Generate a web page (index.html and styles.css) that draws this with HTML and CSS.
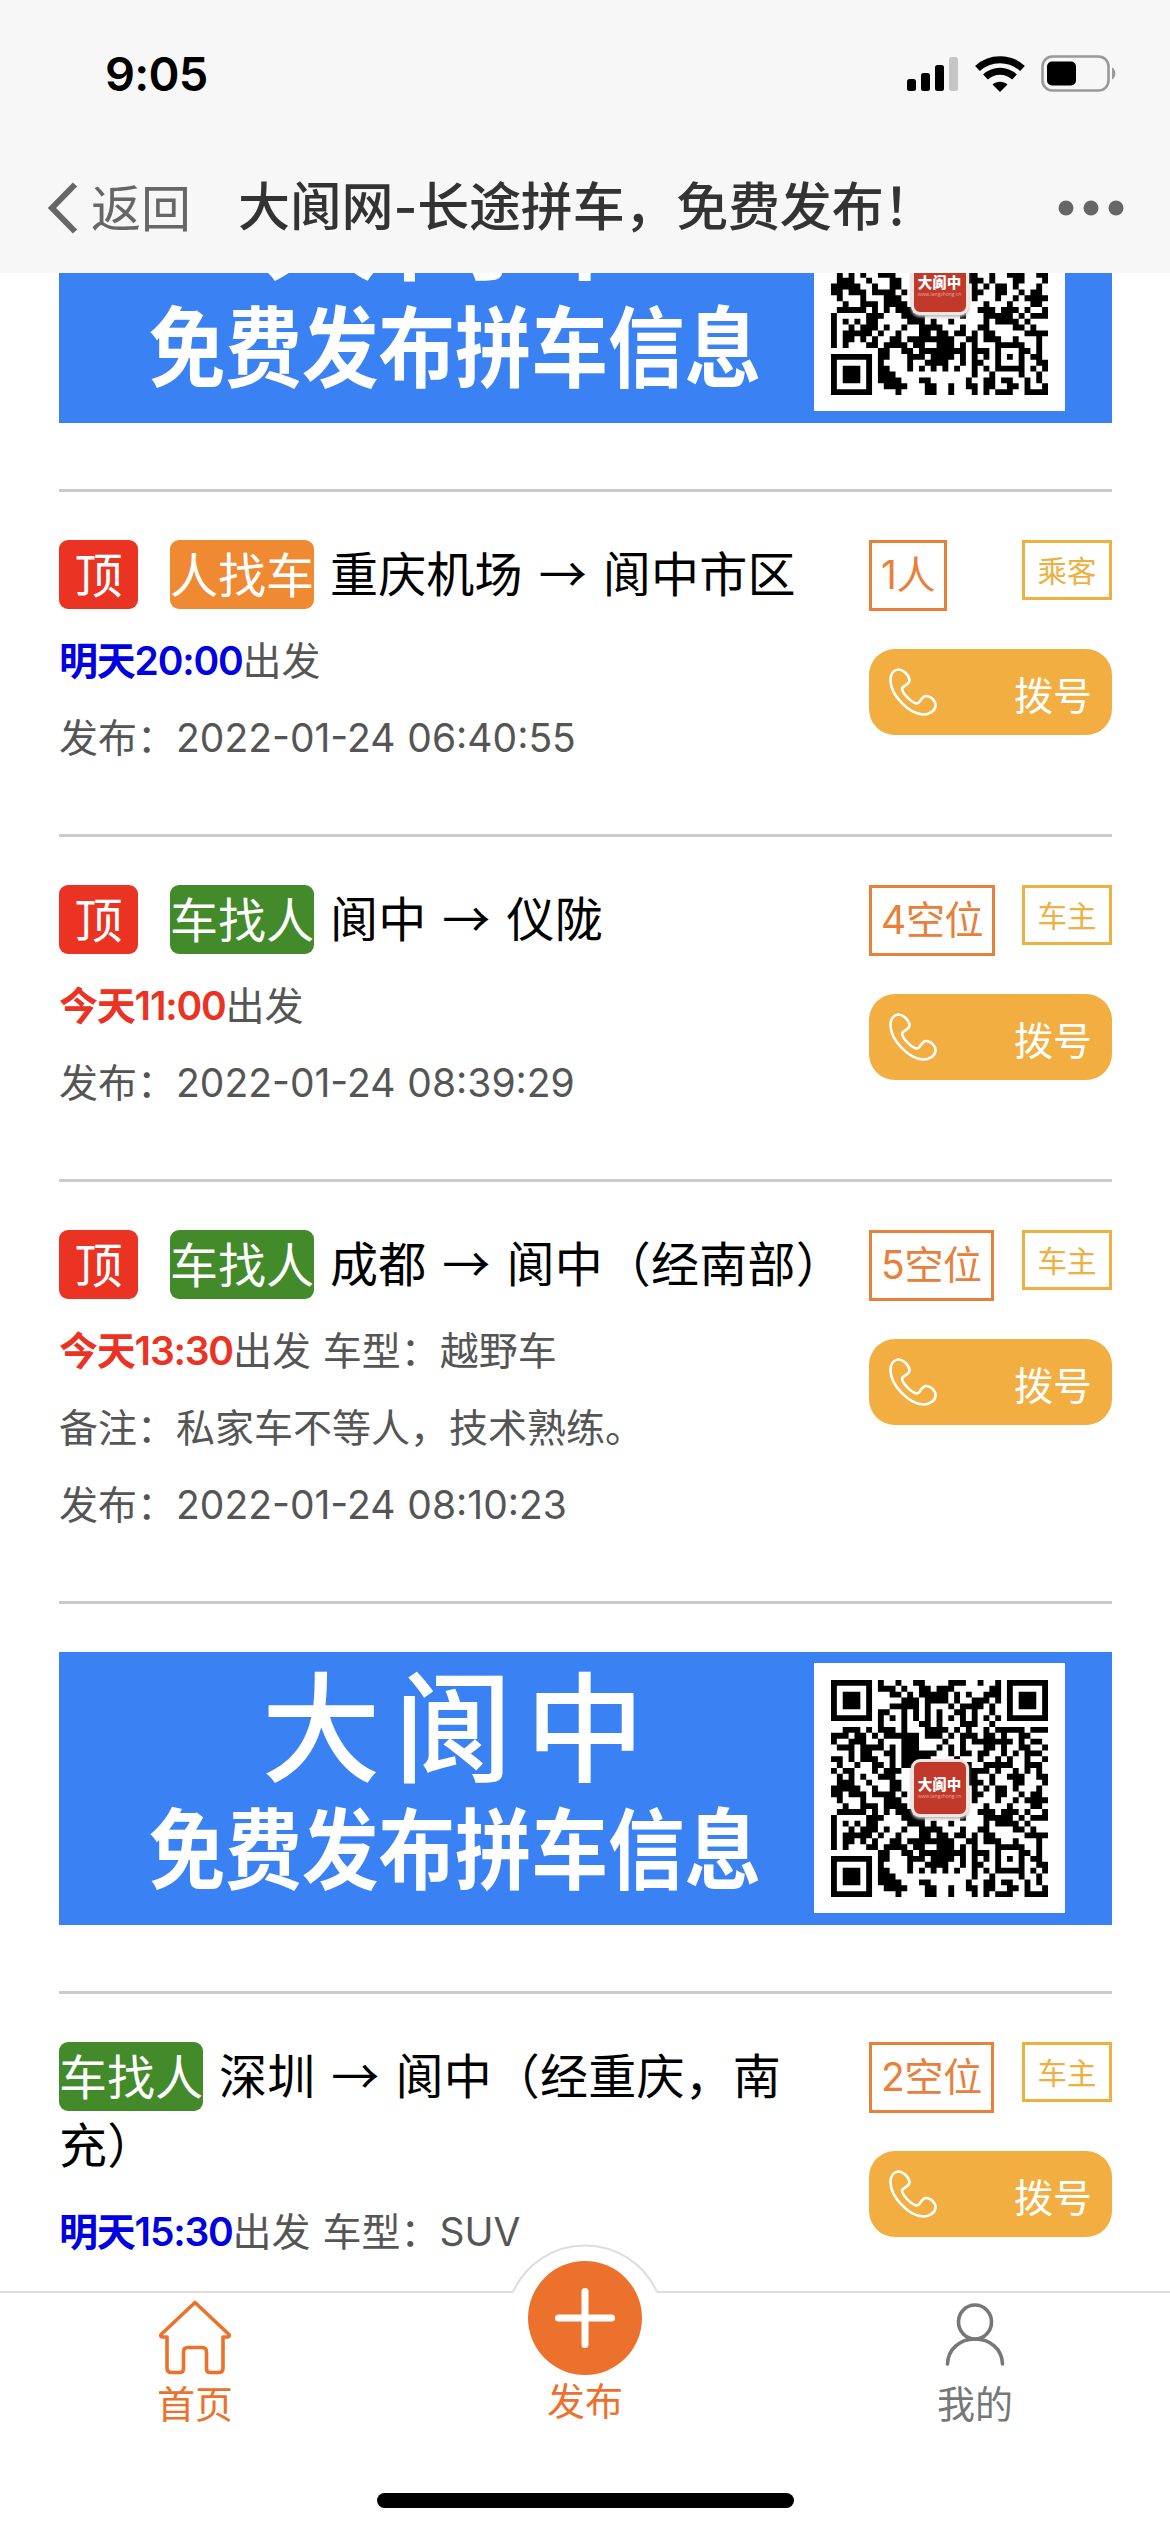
FILE: index.html
```html
<!DOCTYPE html>
<html lang="zh-CN">
<head>
<meta charset="utf-8">
<title>大阆网-长途拼车，免费发布！</title>
<link rel="stylesheet" href="styles.css">
</head>
<body>
<svg class="defs" width="0" height="0" aria-hidden="true">
  <symbol id="phone" viewBox="0 0 48 48">
    <path d="M9 1.500C14 1 20 7 20.500 12C21 17 13 17.500 13 21C14 26 22 34 27.500 35.500C31 36.500 32 28 37 28C42 28 47 33 46.500 38C46 43 40 46.500 34 46.500C20 46 1.500 27 1.500 12C1.500 6 4.500 2 9 1.500Z" fill="none" stroke="#fff" stroke-width="2.600"/>
  </symbol>
</svg>
<div class="screen">
  <header class="top">
    <div class="status">
      <span class="clock">9:05</span>
      <div class="signals">
        <svg width="52" height="36" viewBox="0 0 52 36">
          <rect x="0" y="23" width="9" height="12" rx="2.500"/><rect x="14" y="17" width="9" height="18" rx="2.500"/><rect x="28" y="9" width="9" height="26" rx="2.500"/><rect x="42" y="1" width="9" height="34" rx="2.500" fill="#c6c6c6"/>
        </svg>
        <svg width="50" height="36" viewBox="0 0 50 36">
          <g fill="none" stroke="#000" stroke-width="7"><path d="M2.500 12.500C15 .8 35 .8 47.500 12.500"/><path d="M10.500 21C19 13.300 31 13.300 39.500 21"/></g>
          <path d="M17.500 28.500C22 24.800 28 24.800 32.500 28.500L25 36Z"/>
        </svg>
        <svg width="76" height="38" viewBox="0 0 76 38">
          <rect x="1.500" y="1.500" width="66" height="34" rx="10" fill="none" stroke="#999" stroke-width="2.600"/>
          <rect x="6" y="6.500" width="29" height="24" rx="5"/>
          <path d="M71 12.500C75.500 14.500 75.500 22.500 71 24.500Z" fill="#999"/>
        </svg>
      </div>
    </div>
    <div class="nav">
      <svg class="chevron" width="32" height="52" viewBox="0 0 32 52"><path d="M27 2.500L4 26L27 49.500" fill="none" stroke="#666" stroke-width="6"/></svg>
      <span class="back">返回</span>
      <h1 class="page-title">大阆网-长途拼车，免费发布！</h1>
      <svg class="more" width="66" height="16" viewBox="0 0 66 16" fill="#666"><circle cx="8" cy="8" r="7.500"/><circle cx="33" cy="8" r="7.500"/><circle cx="58" cy="8" r="7.500"/></svg>
    </div>
  </header>

  <main class="viewport">
    <div class="feed">
      <div class="banner">
        <div class="slogan"><span class="brand">大阆中</span><span class="pitch">免费发布拼车信息</span></div>
        <div class="code"><svg class="qr" viewBox="0 0 37 37"></svg><div class="logo"><b>大阆中</b><i>www.langzhong.cn</i></div></div>
      </div>
      <div class="gap"></div>

      <article class="trip">
        <div class="info">
          <h2 class="route"><span class="pin">顶</span><span class="kind seek">人找车</span> 重庆机场 → 阆中市区</h2>
          <p><b class="tomorrow">明天20:00</b>出发</p>
          <p>发布：2022-01-24 06:40:55</p>
        </div>
        <div class="side">
          <div class="tags"><span class="seats">1人</span><span class="role">乘客</span></div>
          <div class="call"><svg><use href="#phone"/></svg><span>拨号</span></div>
        </div>
      </article>

      <article class="trip">
        <div class="info">
          <h2 class="route"><span class="pin">顶</span><span class="kind">车找人</span> 阆中 → 仪陇</h2>
          <p><b class="today">今天11:00</b>出发</p>
          <p>发布：2022-01-24 08:39:29</p>
        </div>
        <div class="side">
          <div class="tags"><span class="seats">4空位</span><span class="role">车主</span></div>
          <div class="call"><svg><use href="#phone"/></svg><span>拨号</span></div>
        </div>
      </article>

      <article class="trip">
        <div class="info">
          <h2 class="route"><span class="pin">顶</span><span class="kind">车找人</span> 成都 → 阆中（经南部）</h2>
          <p><b class="today">今天13:30</b>出发 车型：越野车</p>
          <p>备注：私家车不等人，技术熟练。</p>
          <p>发布：2022-01-24 08:10:23</p>
        </div>
        <div class="side">
          <div class="tags"><span class="seats">5空位</span><span class="role">车主</span></div>
          <div class="call"><svg><use href="#phone"/></svg><span>拨号</span></div>
        </div>
      </article>

      <div class="advert">
        <div class="banner">
          <div class="slogan"><span class="brand">大阆中</span><span class="pitch">免费发布拼车信息</span></div>
          <div class="code"><svg class="qr" viewBox="0 0 37 37"></svg><div class="logo"><b>大阆中</b><i>www.langzhong.cn</i></div></div>
        </div>
      </div>

      <article class="trip">
        <div class="info">
          <h2 class="route two-line"><span class="kind">车找人</span> 深圳 → 阆中（经重庆，南<br>充）</h2>
          <p><b class="tomorrow">明天15:30</b>出发 车型：SUV</p>
        </div>
        <div class="side">
          <div class="tags"><span class="seats">2空位</span><span class="role">车主</span></div>
          <div class="call"><svg><use href="#phone"/></svg><span>拨号</span></div>
        </div>
      </article>
    </div>
  </main>

  <footer class="tabbar">
    <div class="tabs">
      <div class="tab active">
        <svg width="76" height="76" viewBox="0 0 76 76" fill="none" stroke="#ec712d" stroke-width="3.600" stroke-linejoin="round"><path d="M38 3.500L72 35.500Q73 38 70.500 38H66V69Q66 73.500 61.500 73.500H53Q49.500 73.500 49.500 69.500V53Q49.500 48.500 45 48.500H31Q26.500 48.500 26.500 53V69.500Q26.500 73.500 23 73.500H14.500Q10 73.500 10 69V38H5.500Q3 38 4 35.500Z"/></svg>
        <span>首页</span>
      </div>
      <div class="tab publish">
        <svg class="bump" width="160" height="150" viewBox="0 0 160 150">
          <path d="M8 49A79 79 0 0 1 152 49V60H8Z" fill="#fff"/><path d="M8 49A79 79 0 0 1 152 49" fill="none" stroke="#ddd" stroke-width="2"/>
          <circle cx="80" cy="75" r="57" fill="#ec712d"/><path d="M80 48.500V101.500M53.500 75H106.500" stroke="#fff" stroke-width="7" stroke-linecap="round"/>
        </svg>
        <span>发布</span>
      </div>
      <div class="tab">
        <svg width="76" height="76" viewBox="0 0 76 76" fill="none" stroke="#777" stroke-width="3.600" stroke-linecap="round"><ellipse cx="38" cy="23" rx="16.500" ry="17"/><path d="M10.500 65C11 50 23 40 38 40S65 50 65.500 65"/></svg>
        <span>我的</span>
      </div>
    </div>
    <div class="home-indicator"></div>
  </footer>
</div>
<script src="qr.js"></script>
</body>
</html>
```
FILE: styles.css
```css
* { box-sizing: border-box; }
body {
  margin: 0;
  background: #fff;
  font-family: Inter, "Noto Sans CJK SC", sans-serif;
}
h1, h2, p { margin: 0; font-weight: 400; }
svg { display: block; flex: none; }
.defs { position: absolute; }
.screen { width: 1170px; height: 2532px; display: flex; flex-direction: column; overflow: hidden; }

/* status and navigation */
.top { height: 273px; flex: none; background: #f7f7f7; }
.status { height: 142px; padding: 6px 53px 0 105px; display: flex; align-items: center; justify-content: space-between; }
.clock { font-size: 47px; font-weight: 600; line-height: 60px; letter-spacing: -.8px; }
.signals { display: flex; align-items: center; gap: 16px; }
.nav { height: 131px; padding: 0 46px 0 48px; display: flex; align-items: center; font-family: "Noto Sans CJK SC", sans-serif; }
.chevron { width: 32px; }
.back { font-size: 50px; line-height: 60px; color: #666; margin: 0 0 6px 11px; width: 147px; }
.page-title { flex: 1; white-space: nowrap; font-family: Inter, "Noto Sans CJK SC", sans-serif; font-size: 52px; line-height: 60px; letter-spacing: -.2px; font-weight: 500; color: #333; }

/* scrolled list */
.viewport { flex: 1; min-height: 0; overflow: hidden; }
.feed { margin: -123px 58px 0 59px; }
.gap { height: 66px; }
.banner { height: 273px; background: #3a81f3; display: flex; color: #fff; font-family: "Noto Sans CJK SC", sans-serif; }
.slogan { width: 755px; padding-left: 37px; display: flex; flex-direction: column; align-items: center; white-space: nowrap; }
.brand { font-size: 119px; line-height: 120px; letter-spacing: 13px; font-weight: 500; margin-top: 9px; margin-right: -9px; }
.pitch { font-size: 88px; line-height: 110px; font-weight: 700; margin-top: 8px; transform: scaleX(.87); }
.code { width: 251px; height: 250px; margin-top: 11px; background: #fff; display: grid; place-items: center; }
.qr, .logo { grid-area: 1 / 1; }
.qr { width: 217px; height: 217px; }
.logo { width: 58px; height: 58px; border: 3px solid #f3e6e2; border-radius: 9px; background: #c0392b; display: flex; flex-direction: column; align-items: center; justify-content: center; white-space: nowrap; overflow: hidden; box-shadow: 0 2px 3px #bbb; }
.logo b { font-size: 14.500px; line-height: 16px; font-weight: 900; }
.logo i { font: 5px/9px "Open Sans", sans-serif; color: #e9a59c; }

.trip, .advert { border-top: 3px solid #ccc; }
.advert { padding: 48px 0 66px; }
.trip { padding: 48px 0 58px; display: flex; justify-content: space-between; }
.info { width: 790px; }
.route { font-family: "Noto Sans CJK SC", sans-serif; font-size: 48px; line-height: 63px; color: #000; word-spacing: 5px; letter-spacing: .2px; margin-bottom: 13px; white-space: nowrap; }
.route.two-line { margin-bottom: 19px; }
.route span { display: inline-block; height: 69px; line-height: 64px; letter-spacing: 0; vertical-align: top; border-radius: 9px; color: #fff; }
.pin { width: 79px; margin-right: 32px; text-align: center; background: #ea3323; }
.kind { width: 144px; background: #438b2a; }
.kind.seek { background: #ef8932; }
.info p { font-size: 39px; line-height: 77px; color: #555; white-space: nowrap; word-spacing: 1px; }
.info b { font-weight: 600; letter-spacing: -1.2px; }
.tomorrow { color: #0000e0; }
.today { color: #ea3323; }

.side { width: 243px; flex: none; }
.tags { display: flex; justify-content: space-between; align-items: flex-start; height: 109px; }
.seats { height: 71px; border: 3px solid #e8803a; padding: 0 9px; font-size: 39px; line-height: 63px; letter-spacing: -.3px; color: #e8803a; }
.role { width: 90px; height: 60px; border: 3px solid #edb041; text-align: center; font-size: 29.500px; line-height: 56px; color: #edb041; }
.call { height: 86px; border-radius: 26px; background: #f2ae40; padding: 0 20px; display: flex; justify-content: space-between; color: #fff; font-size: 39px; line-height: 94px; }
.call svg { width: 48px; height: 48px; margin-top: 19px; }

/* bottom tabs */
.tabbar { height: 241px; flex: none; border-top: 2px solid #ddd; background: #fff; }
.tabs { display: grid; grid-template-columns: repeat(3, 1fr); height: 200px; }
.tab { position: relative; display: flex; flex-direction: column; align-items: center; padding-top: 6px; font-size: 38px; line-height: 50px; color: #777; }
.tab span { margin-top: 4px; }
.active, .publish { color: #ec712d; }
.publish { padding-top: 79px; }
.bump { position: absolute; top: -50px; left: 115px; }
.home-indicator { width: 417px; height: 15px; border-radius: 8px; background: #000; margin: 0 auto; }
```
FILE: qr.js
```js
// Module rows of the code; "#" is a dark module.
const rows = [
  "#######.#..#..##....###..#..#.#######",
  "#.....#.###.#..##.###......##.#.....#",
  "#.###.#...##.#.#####.#.#..###.#.###.#",
  "#.###.#.....###.####.#..###.#.#.###.#",
  "#.###.#...#####.#...#.####.#..#.###.#",
  "#.....#.##..#.#.#.#..##.#..#..#.....#",
  "#######.#.#.#.#.#.#.#.#.#.#.#.#######",
  "........#...#..##.#...###..#.........",
  "..###.#.###.#...####.#.#..#.#####.###",
  "###.##.#.######.###.#.###.##.#..##...",
  "#..###..#...###....#..#.#######.#.##.",
  ".###.####.#.###...#.#.#...##.#..##..#",
  "...#.##..##.######..#.##.##..#.#.###.",
  "##.#.###..#.#####....#...#..#.#..#..#",
  ".#..#..##.#.####......##..#####..###.",
  "#.##...#.###.......#.#.####.#..#.#.#.",
  ".#.#.#..###............##..#..###..##",
  ".###..#...##...........###.#...##...#",
  "#####..#..##............#.#.##.#...#.",
  "##.###.####.#...........##..##..#.##.",
  ".#...#...###............#...#..#.####",
  "..#..###.####.............#...#...##.",
  ".#####.#.#.###...........###.###.#..#",
  "#.....###...####......#...#####.#.###",
  "#.#.#.##.....###.#..#.....#.####.#...",
  "#..#.###.#..#..####...#..##....##.#..",
  "#.#####.#..#...##.##.##.#.##.....####",
  "#.##.#.#..##.########..##.###..#...#.",
  "#.#...##.####.##..###.#.#...#####..#.",
  "........##..##.########.###.#...##.#.",
  "#######.##...###.####.#.#.#.#.#.#.##.",
  "#.....#.#....#..####..#.##..#...#..##",
  "#.###.#.##...#.#.#.#.#..#.#.#####.#.#",
  "#.###.#.###.............#..#....#..#.",
  "#.###.#.####...##......#..##.##..#.#.",
  "#.....#..####...##..#..##.##..##.#..#",
  "#######....#....##..#...#.#.###..####"
];

let d = "";
rows.forEach((row, y) => {
  for (const run of row.matchAll(/#+/g)) {
    d += `M${run.index} ${y}h${run[0].length}v1h-${run[0].length}z`;
  }
});
document.querySelectorAll(".qr").forEach(svg => {
  svg.innerHTML = `<path d="${d}"/>`;
});
```
